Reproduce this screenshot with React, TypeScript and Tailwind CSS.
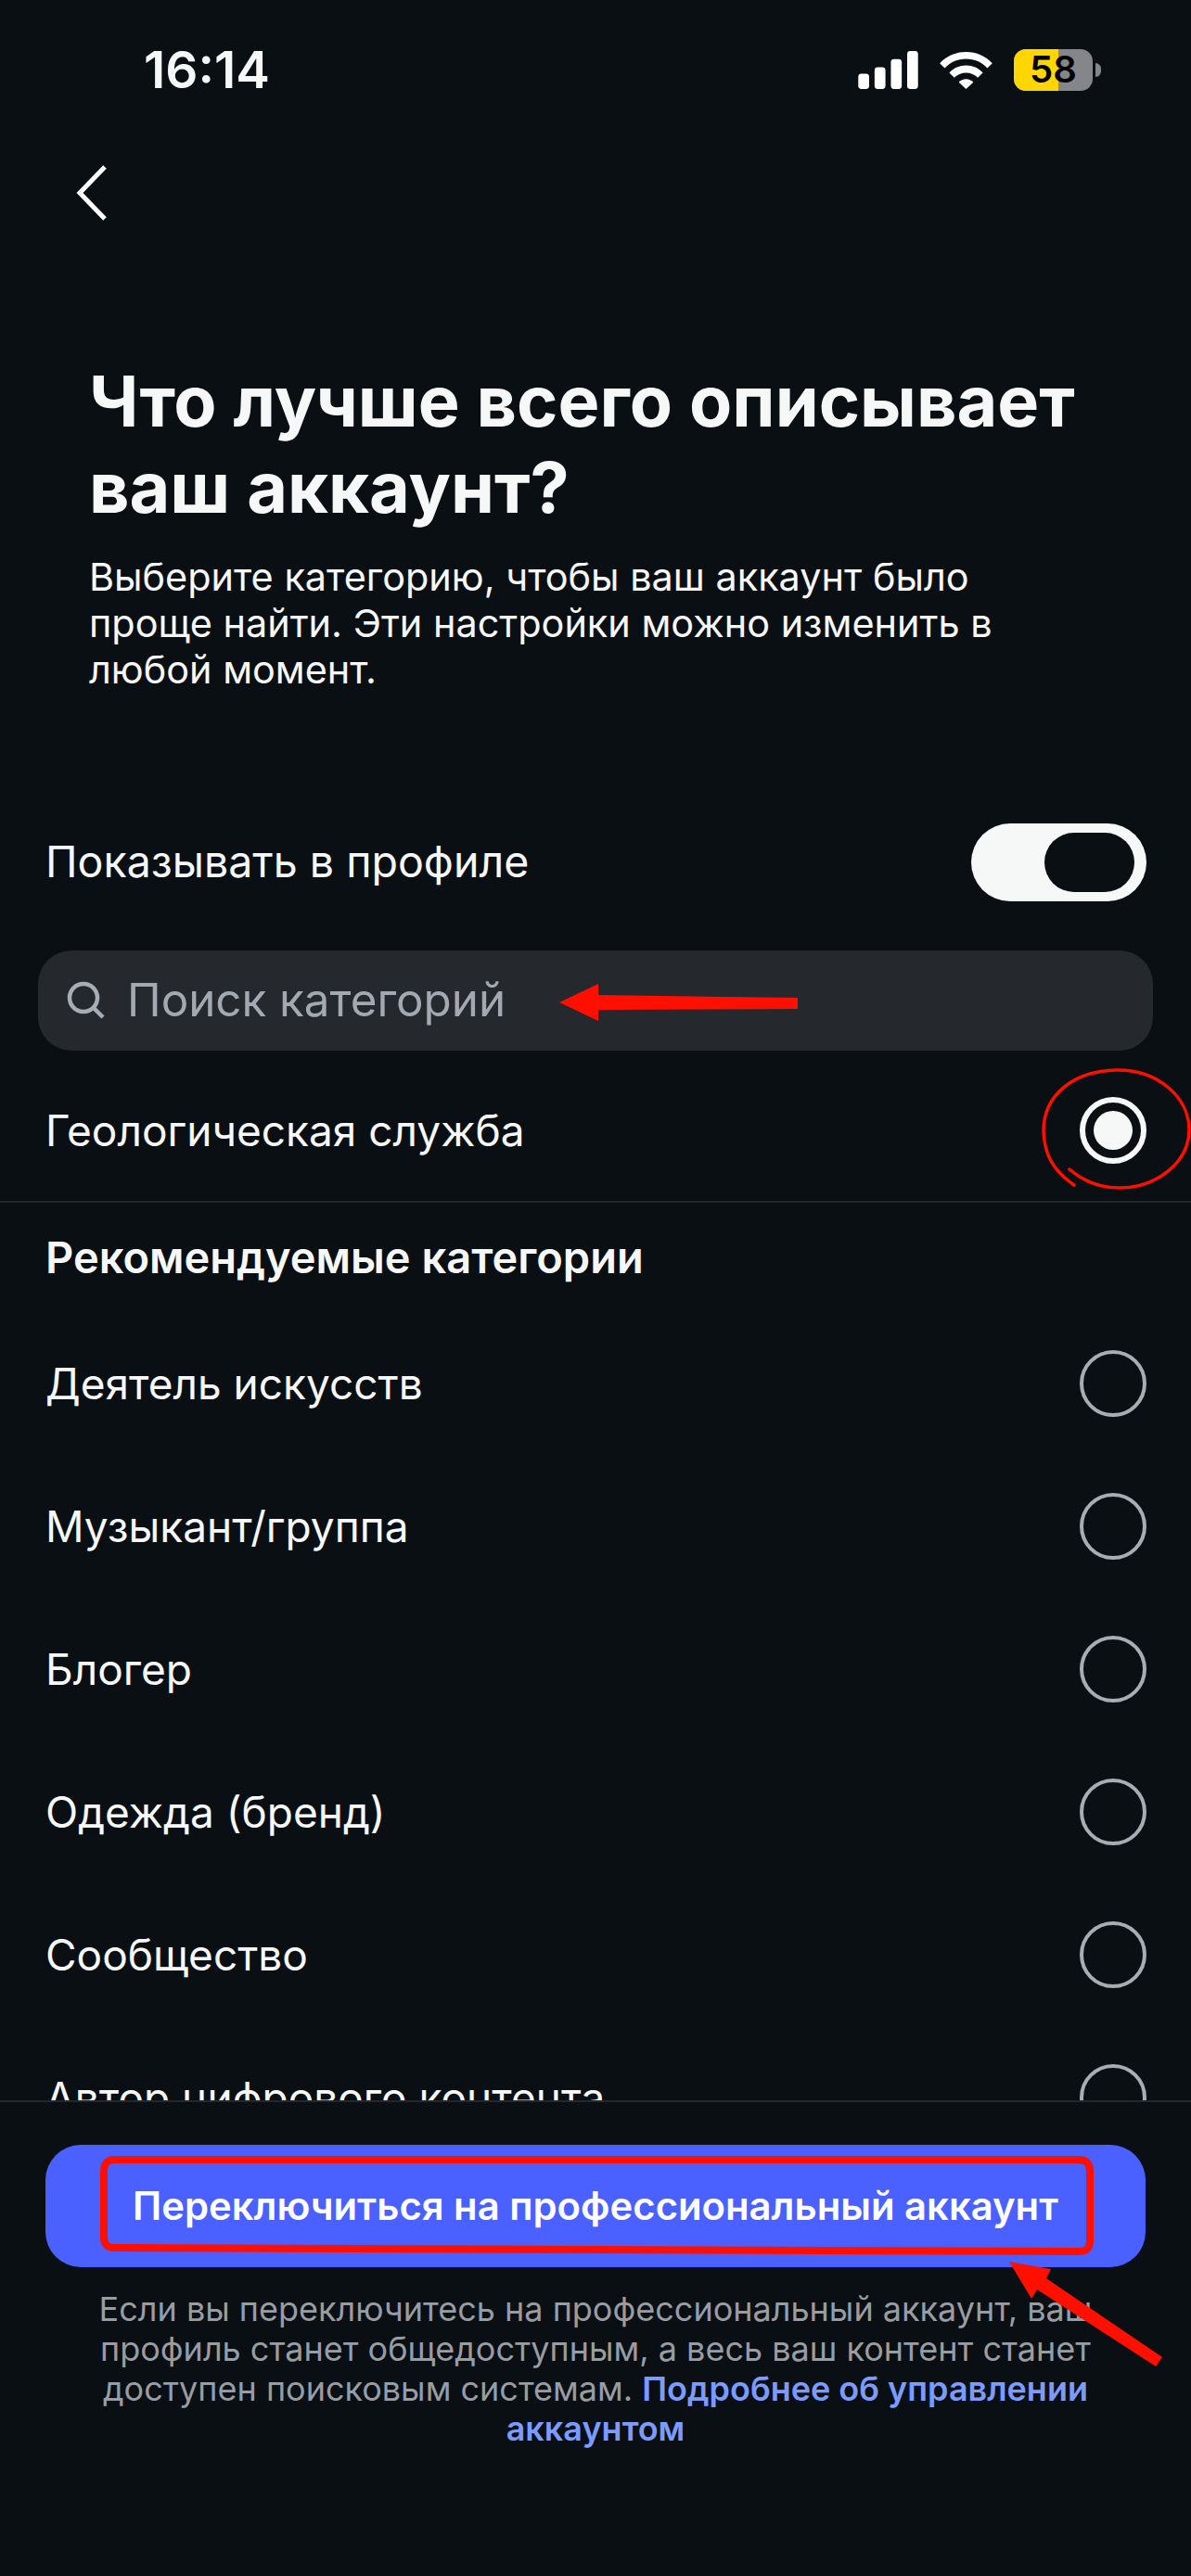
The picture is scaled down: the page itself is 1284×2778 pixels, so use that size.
import React from 'react';

const rows = ['Деятель искусств', 'Музыкант/группа', 'Блогер', 'Одежда (бренд)', 'Сообщество', 'Автор цифрового контента'];

const StatusIcons = () => (
  <div className="flex items-center">
    <svg width="65" height="41" viewBox="0 0 66 42" fill="#fff">
      <rect x="0" y="25" width="12" height="17" rx="3.5" />
      <rect x="18" y="18" width="12" height="24" rx="3.5" />
      <rect x="36" y="9" width="12" height="33" rx="3.5" />
      <rect x="54" y="0" width="12" height="42" rx="3.5" />
    </svg>
    <svg className="ml-[23px]" width="57" height="41" viewBox="0 0 58 42" fill="#fff">
      <path d="M0 13.500C7.500 5.500 17.500 1 29 1s21.500 4.500 29 12.500l-5.500 5.500C46.500 12.500 38.500 8.800 29 8.800S11.500 12.500 5.500 19z" />
      <path d="M10.500 24C15.500 18.800 21.800 16 29 16s13.500 2.800 18.500 8L42 29.500C38.500 26 34 24 29 24s-9.500 2-13 5.500z" />
      <path d="M21 34.500c2-2.200 4.900-3.500 8-3.500s6 1.300 8 3.500L29 42z" />
    </svg>
    <div className="ml-[23px] flex items-center">
      <div className="relative flex h-[45px] w-[85px] items-center justify-center overflow-hidden rounded-[13px] bg-[#85868a]">
        <div className="absolute inset-y-0 left-0 w-[48px] bg-[#ffd600]" />
        <span className="relative text-[40px] leading-none font-semibold text-black">58</span>
      </div>
      <div className="ml-[3px] h-[15px] w-[6px] rounded-r-full bg-[#85868a]" />
    </div>
  </div>
);

const Radio = ({ selected }: { selected?: boolean }) =>
  selected ? (
    <div className="flex h-[72px] w-[72px] shrink-0 items-center justify-center rounded-full border-[6px] border-[#f6f8f8]">
      <div className="h-[42px] w-[42px] rounded-full bg-[#f6f8f8]" />
    </div>
  ) : (
    <div className="h-[72px] w-[72px] shrink-0 rounded-full border-[4px] border-[#a8adb3]" />
  );

export default function App() {
  return (
    <div
      className="relative flex h-[2778px] w-[1284px] flex-col overflow-hidden bg-[#0a0f13] text-[#f6f8f8]"
      style={{ fontFamily: 'Inter, "Noto Sans", sans-serif' }}
    >
      <div className="flex h-[2265px] flex-col overflow-hidden">
        <div className="flex h-[150px] shrink-0 items-center justify-between pr-[97px] pl-[155px]">
          <span className="text-[55px] leading-none font-semibold">16:14</span>
          <StatusIcons />
        </div>

        <div className="flex h-[116px] shrink-0 items-center pl-[80px]">
          <svg width="38" height="60" viewBox="0 0 38 60" fill="none" stroke="#fff" strokeWidth="5">
            <path d="M33 2 6 30l27 28" />
          </svg>
        </div>

        <div className="shrink-0 pt-[120px] pl-[96px]">
          <h1 className="w-[1120px] text-[75.500px] leading-[93px] font-bold">Что лучше всего описывает ваш аккаунт?</h1>
          <p className="mt-[25px] w-[1000px] text-[41.400px] leading-[50px] text-[#f6f8f8]">
            Выберите категорию, чтобы ваш аккаунт было проще найти. Эти настройки можно изменить в любой момент.
          </p>
        </div>

        <div className="mt-[141px] flex shrink-0 items-center justify-between pr-[48px] pl-[49px]">
          <span className="text-[46.500px]">Показывать в профиле</span>
          <div className="flex h-[84px] w-[189px] items-center justify-end rounded-full bg-[#f6f8f8] pr-[13px]">
            <div className="h-[64px] w-[97px] rounded-full bg-[#0a0f13]" />
          </div>
        </div>

        <div className="mx-[41px] mt-[53px] flex h-[108px] shrink-0 items-center rounded-[36px] bg-[#25282d] pl-[31px]">
          <svg width="42" height="42" viewBox="0 0 42 42" fill="none" stroke="#a8adb3" strokeWidth="4.500">
            <circle cx="18" cy="18" r="15" />
            <path d="m29 29 10 10" />
          </svg>
          <span className="ml-[23px] text-[49.300px] text-[#a3a9b1]">Поиск категорий</span>
        </div>

        <div className="flex h-[164px] shrink-0 items-center justify-between border-b-2 border-[#24272b] pt-[10px] pr-[48px] pl-[49px]">
          <span className="text-[46px]">Геологическая служба</span>
          <Radio selected />
        </div>

        <div className="flex h-[118px] shrink-0 items-center pl-[49px] text-[47px] font-semibold">
          Рекомендуемые категории
        </div>

        <div className="flex flex-col">
          {rows.map((r) => (
            <div key={r} className="flex h-[154px] shrink-0 items-center justify-between pr-[48px] pl-[49px]">
              <span className="text-[46px]">{r}</span>
              <Radio />
            </div>
          ))}
        </div>
      </div>

      <div className="flex flex-1 flex-col border-t-2 border-[#24272b] px-[49px] pt-[46px]">
        <div className="flex h-[132px] items-center justify-center rounded-[38px] bg-[#4a60ff] text-[41.800px] font-semibold text-white">
          Переключиться на профессиональный аккаунт
        </div>
        <p className="mx-[54px] mt-[24px] text-center text-[36px] leading-[43px] text-[#989ca3]">
          Если вы переключитесь на профессиональный аккаунт, ваш профиль станет общедоступным, а весь ваш контент станет
          доступен поисковым системам. <span className="font-semibold text-[#7b9bff]">Подробнее об управлении аккаунтом</span>
        </p>
      </div>

      {/* red annotations drawn over the screenshot */}
      <svg className="pointer-events-none absolute inset-0" width="1284" height="2778" fill="none">
        <path d="M603 1081 645 1061 645 1073 860 1076 860 1088 645 1089 645 1101Z" fill="#ff0f00" />
        <path
          d="M1158 1278C1135 1262 1126 1245 1125 1220 1125 1180 1158 1155 1203 1154 1250 1153 1282 1185 1282 1218 1282 1255 1245 1281 1207 1281 1185 1281 1168 1274 1153 1261"
          stroke="#ff0f00"
          strokeWidth="3.500"
          strokeLinecap="round"
        />
        <path
          d="M124 2329H1163C1172 2329 1175 2334 1175 2342V2416C1175 2425 1171 2428 1163 2428L124 2424C115 2424 112 2420 112 2412V2342C112 2333 115 2329 124 2329Z"
          stroke="#ff0f00"
          strokeWidth="8"
        />
        <path d="M1088 2439 1133 2447 1128 2457 1253 2542 1246 2552 1118 2469 1112 2479Z" fill="#ff0f00" />
      </svg>
    </div>
  );
}
